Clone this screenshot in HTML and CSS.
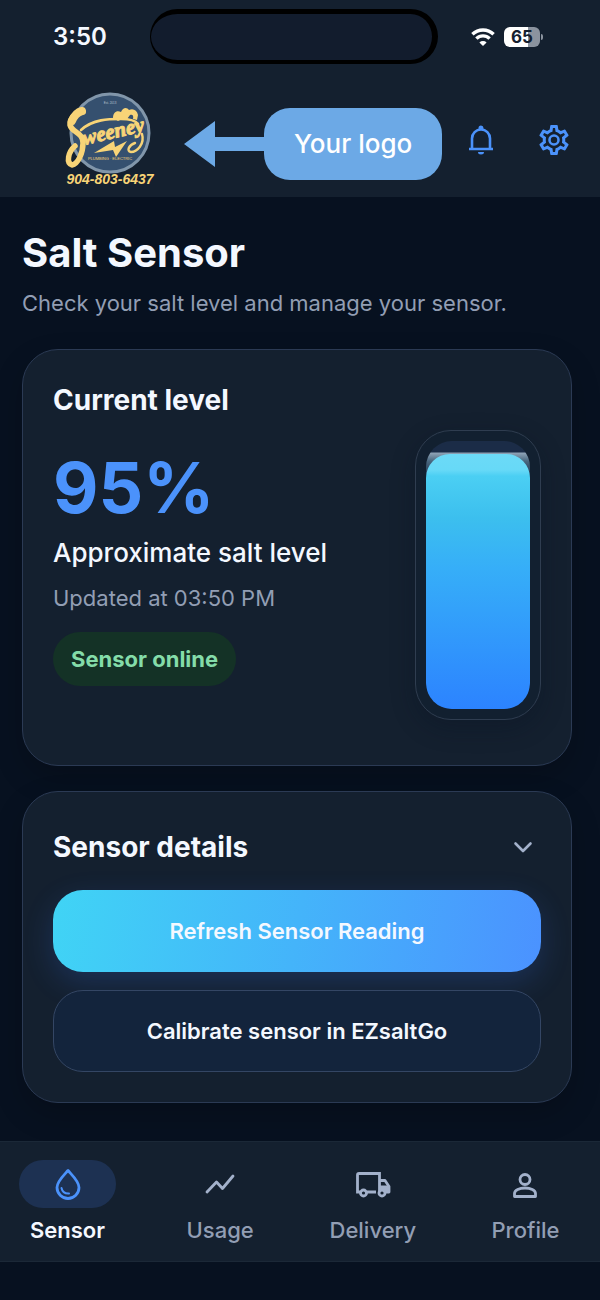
FILE: index.html
```html
<!DOCTYPE html>
<html lang="en">
<head>
  <meta charset="UTF-8">
  <meta name="viewport" content="width=device-width, initial-scale=1.0">
  <title>Salt Sensor</title>
  <link rel="stylesheet" href="styles.css">
</head>
<body>
  <header class="top">
    <div class="status-bar">
      <span class="time">3:50</span>
      <div class="island"></div>
      <div class="status-icons">
        <svg width="24" height="18" viewBox="0 0 24 18" fill="none" stroke="#fff" stroke-width="3.4" aria-hidden="true">
          <path d="M1.4 6.3a15.2 15.2 0 0 1 21.2 0"/>
          <path d="M5.4 10.6a9.4 9.4 0 0 1 13.2 0"/>
          <path d="M12 18l-3.6-3.6a5.1 5.1 0 0 1 7.2 0z" fill="#fff" stroke="none"/>
        </svg>
        <span class="battery">65</span>
      </div>
    </div>
    <div class="app-bar">
      <svg class="logo" width="94" height="96" viewBox="0 0 94 96" role="img" aria-label="Sweeney Plumbing and Electric, 904-803-6437">
        <circle cx="47" cy="41" r="39" fill="#35506f" stroke="#8196aa" stroke-width="3"/>
        <text x="47" y="12" class="logo-est">Est. 2013</text>
        <g fill="none" stroke="#f8d477" stroke-linecap="round">
          <path d="M20 20C14 20 6 26 7 33C9 41 20 40 20 51C20 61 15 72 9 73C3 71 5 60 12 54" stroke-width="5.500"/>
          <path d="M19 19C15 20 11 24 9 29" stroke-width="8"/>
          <path d="M18 38C30 27 46 27 58 27C66 27 72 28 75 32" stroke-width="2.600"/>
          <path d="M79 42C82 52 74 60 68 60C63 59 66 53 72 51" stroke-width="2.400"/>
        </g>
        <path d="M50 26c0-6 4-8 8-6 2-5 6-5 8-2 4-2 8 0 9 5l-1 5-4-1c1-4-1-5-3-4l-3 4h-5l-4 2z" fill="#f8d477"/>
        <text x="21" y="53" class="logo-name" transform="rotate(-13 21 53)">weeney</text>
        <path d="M31 61L51 49L52 55L64 49L53 65L50 58z" fill="#f8d477"/>
        <text x="47" y="68" class="logo-trade">PLUMBING · ELECTRIC</text>
        <text x="47" y="92" class="logo-phone">904-803-6437</text>
      </svg>
      <div class="callout">
        <svg width="80" height="46" viewBox="0 0 80 46" fill="#6ca9e6" aria-hidden="true">
          <path d="M0 23L31 0v16h49v14H31v16z"/>
        </svg>
        <span class="callout-label">Your logo</span>
      </div>
      <div class="actions">
        <button type="button" class="icon-btn" aria-label="Notifications">
          <svg width="36" height="36" viewBox="0 0 36 36" fill="none" stroke="#4b92fb" stroke-width="2.6" aria-hidden="true">
            <path d="M6 27h24M9 27V16.500a9 9 0 0 1 18 0V27" stroke-linejoin="round"/>
            <path d="M15.500 7.500V6a2.500 2.500 0 0 1 5 0v1.500zM15 30h6a3 2.500 0 0 1-6 0z" fill="#4b92fb" stroke="none"/>
          </svg>
        </button>
        <button type="button" class="icon-btn" aria-label="Settings">
          <svg width="36" height="36" viewBox="0 0 24 24" fill="#4b92fb" aria-hidden="true">
            <path d="M19.430 12.980c.04-.32.07-.64.07-.98s-.03-.66-.07-.98l2.110-1.650c.19-.15.24-.42.12-.64l-2-3.460a.5.5 0 0 0-.61-.22l-2.490 1a7.300 7.300 0 0 0-1.690-.98l-.38-2.650A.49.490 0 0 0 14 2h-4a.49.490 0 0 0-.49.420l-.38 2.650c-.61.250-1.170.590-1.690.98l-2.490-1a.5.5 0 0 0-.61.220l-2 3.460c-.13.220-.07.490.12.640l2.110 1.650c-.04.320-.07.650-.07.980s.03.660.07.980l-2.110 1.650c-.19.150-.24.420-.12.640l2 3.460c.12.220.38.300.61.220l2.490-1c.52.400 1.080.730 1.690.98l.38 2.650c.03.240.24.420.49.420h4c.25 0 .46-.18.49-.42l.38-2.650c.61-.25 1.170-.59 1.690-.98l2.490 1c.23.080.49 0 .61-.22l2-3.460c.12-.22.07-.49-.12-.64zm-1.980-1.710c.04.310.05.520.05.730s-.02.430-.05.730l-.14 1.130.89.700 1.080.840-.7 1.210-1.270-.51-1.040-.42-.9.680c-.43.320-.84.560-1.250.730l-1.060.430-.16 1.130-.2 1.350h-1.400l-.35-2.480-1.060-.43c-.43-.18-.83-.41-1.230-.71l-.91-.7-1.060.430-1.270.510-.7-1.210 1.970-1.540-.14-1.130a7 7 0 0 1 0-1.470l.14-1.130-1.970-1.540.7-1.210 2.310.930.910-.69c.43-.32.84-.56 1.250-.73l1.060-.43.350-2.480h1.390l.35 2.480 1.060.430c.43.180.83.410 1.230.71l.91.700 2.330-.94.700 1.210-1.960 1.550z"/>
            <circle cx="12" cy="12" r="3" fill="none" stroke="#4b92fb" stroke-width="1.700"/>
          </svg>
        </button>
      </div>
    </div>
  </header>

  <main>
    <h1>Salt Sensor</h1>
    <p class="subtitle">Check your salt level and manage your sensor.</p>

    <section class="card level-card">
      <h2>Current level</h2>
      <div class="level">
        <div class="level-info">
          <p class="percent">95%</p>
          <p class="level-label">Approximate salt level</p>
          <p class="updated">Updated at 03:50 PM</p>
          <span class="badge">Sensor online</span>
        </div>
        <div class="tank">
          <div class="tank-inner">
            <div class="tank-fill" style="height: 95%"></div>
          </div>
        </div>
      </div>
    </section>

    <section class="card details-card">
      <div class="details-head">
        <h2>Sensor details</h2>
        <button type="button" class="icon-btn" aria-label="Toggle sensor details">
          <svg width="36" height="36" viewBox="0 0 36 36" fill="none" stroke="#a3b1cb" stroke-width="2.600" stroke-linecap="round" stroke-linejoin="round" aria-hidden="true">
            <path d="M10.500 14.500l7.500 7.500 7.500-7.500"/>
          </svg>
        </button>
      </div>
      <button type="button" class="btn primary">Refresh Sensor Reading</button>
      <button type="button" class="btn secondary">Calibrate sensor in EZsaltGo</button>
    </section>
  </main>

  <nav class="tabs">
    <a href="#sensor" class="tab active" aria-current="page">
      <span class="tab-icon">
        <svg width="36" height="36" viewBox="0 0 36 36" fill="none" stroke="#4b92fb" stroke-width="2.800" aria-hidden="true">
          <path d="M18 4.500C14 9 7 15.500 7 21.500a11 11 0 0 0 22 0C29 15.500 22 9 18 4.500z" stroke-linejoin="round"/>
          <path d="M11.500 22c.7 3.500 3.500 5.800 7.500 5.600" stroke-width="2" stroke-linecap="round"/>
        </svg>
      </span>
      Sensor
    </a>
    <a href="#usage" class="tab">
      <span class="tab-icon">
        <svg width="36" height="36" viewBox="0 0 36 36" fill="none" stroke="#a3b1cb" stroke-width="2.800" stroke-linecap="round" stroke-linejoin="round" aria-hidden="true">
          <path d="M5 26l9.500-10 6 6.500L31 10"/>
        </svg>
      </span>
      Usage
    </a>
    <a href="#delivery" class="tab">
      <span class="tab-icon">
        <svg width="36" height="36" viewBox="0 0 36 36" fill="none" stroke="#a3b1cb" stroke-width="2.800" aria-hidden="true">
          <path d="M5 26H2.500V9q0-1.500 1.500-1.500h20.500V26M12 26h9"/>
          <path d="M25 14.500h5l4 6V26h-4" stroke-linejoin="round"/>
          <path d="M24.500 19.500h9V26h-9z" fill="#a3b1cb" stroke="none"/>
          <circle cx="8.500" cy="27" r="3"/>
          <circle cx="27" cy="27" r="3" fill="#14202f"/>
        </svg>
      </span>
      Delivery
    </a>
    <a href="#profile" class="tab">
      <span class="tab-icon">
        <svg width="36" height="36" viewBox="0 0 36 36" fill="none" stroke="#a3b1cb" stroke-width="2.800" stroke-linejoin="round" aria-hidden="true">
          <circle cx="18" cy="13.500" r="5"/>
          <path d="M7.500 30.500v-3c0-3.500 5-5.500 10.500-5.500s10.500 2 10.500 5.500v3z"/>
        </svg>
      </span>
      Profile
    </a>
  </nav>
</body>
</html>
```
FILE: styles.css
```css
* {
  box-sizing: border-box;
}
body {
  margin: 0;
  min-height: 100vh;
  display: flex;
  flex-direction: column;
  font-family: Inter, "Liberation Sans", sans-serif;
  background-color: #071120;
  color: #f4f8ff;
}
h1,
h2,
p {
  margin: 0;
}
button {
  font-family: inherit;
  cursor: pointer;
}
svg {
  display: block;
}

/* Header */
.top {
  background-color: #14202f;
}
.status-bar {
  display: grid;
  grid-template-columns: 1fr 288px 1fr;
  align-items: center;
  padding: 9px 12px 0 0;
}
.time {
  padding-left: 10px;
  text-align: center;
  font-size: 24px;
  font-weight: 600;
}
.island {
  height: 55px;
  border: solid #000;
  border-width: 5px 6px 4px 1px;
  border-radius: 28px;
  background-color: #121c2d;
}
.status-icons {
  display: flex;
  align-items: center;
  gap: 9px;
  padding-left: 33px;
}
.battery {
  position: relative;
  width: 36px;
  border-radius: 6px;
  background: linear-gradient(90deg, #fff 66%, #8b939f 66%);
  color: #14202f;
  font-size: 17px;
  font-weight: 700;
  line-height: 20px;
  text-align: center;
}
.battery::after {
  content: "";
  position: absolute;
  top: 7px;
  right: -3px;
  width: 2px;
  height: 6px;
  border-radius: 0 2px 2px 0;
  background-color: #8b939f;
}
.app-bar {
  display: flex;
  align-items: center;
  padding: 28px 28px 9px 63px;
}
.logo {
  flex: none;
}
.logo text {
  fill: #f8d477;
  text-anchor: middle;
  font-family: "Liberation Sans", sans-serif;
}
.logo .logo-name {
  text-anchor: start;
  font-family: "Liberation Serif", serif;
  font-size: 21px;
  font-style: italic;
  font-weight: bold;
  stroke: #f8d477;
  stroke-width: 1px;
}
.logo .logo-est {
  fill: #b9c4cf;
  font-size: 3px;
}
.logo .logo-trade {
  font-size: 4px;
}
.logo .logo-phone {
  font-size: 14px;
  font-style: italic;
  font-weight: bold;
}
.callout {
  display: flex;
  align-items: center;
  margin: 8px 0 0 27px;
}
.callout-label {
  padding: 0 30px;
  border-radius: 26px;
  background-color: #6ca9e6;
  color: #fff;
  font-size: 26px;
  font-weight: 500;
  line-height: 72px;
  white-space: nowrap;
}
.actions {
  display: flex;
  gap: 37px;
  margin-left: auto;
}
.icon-btn {
  padding: 0;
  border: none;
  background: none;
}

/* Content */
main {
  padding: 32px 28px 38px 22px;
}
h1 {
  font-size: 40px;
  font-weight: 700;
  line-height: 48px;
}
h2 {
  font-size: 28px;
  font-weight: 700;
  line-height: 40px;
}
.subtitle {
  margin: 12px 0 32px;
  color: #929eb4;
  font-size: 22px;
  line-height: 28px;
}
.card {
  padding: 30px;
  border: 1px solid #2b3a54;
  border-radius: 36px;
  background-color: #14202f;
  box-shadow: 0 12px 30px rgba(0, 0, 0, 0.2);
}
.level-card {
  margin-bottom: 25px;
  padding-bottom: 45px;
}
.level {
  display: flex;
  justify-content: space-between;
  margin-top: 10px;
}
.level-info {
  padding-top: 18px;
}
.percent {
  color: #4b92fb;
  font-size: 70px;
  font-weight: 700;
  line-height: 80px;
}
.level-label {
  margin-top: 9px;
  font-size: 26px;
  font-weight: 500;
  line-height: 32px;
}
.updated {
  margin: 15px 0 20px;
  color: #929eb4;
  font-size: 22px;
  line-height: 28px;
}
.badge {
  display: inline-block;
  padding: 0 18px;
  border-radius: 28px;
  background-color: #143226;
  color: #84dca9;
  font-size: 22px;
  font-weight: 700;
  line-height: 54px;
}
.tank {
  width: 126px;
  height: 290px;
  padding: 10px;
  border: 1px solid #2f3d50;
  border-radius: 36px;
  background-color: #122030;
  box-shadow: 0 8px 24px rgba(7, 17, 32, 0.3);
}
.tank-inner {
  display: flex;
  align-items: flex-end;
  height: 100%;
  border-radius: 26px;
  background: linear-gradient(#1b2c47 11px, #8fa3b6 12px, #4a6880 20px, #1b2c47 36px);
  overflow: hidden;
}
.tank-fill {
  width: 100%;
  border-radius: 24px;
  background: linear-gradient(#6cdaf7, #67d9f7 16px, #4bcff3 22px, #3cbfee 25%, #36aef8 45%, #2c83ff);
}
.details-card {
  display: flex;
  flex-direction: column;
  gap: 18px;
}
.details-head {
  display: flex;
  align-items: center;
  justify-content: space-between;
  height: 50px;
}
.btn {
  height: 82px;
  border: none;
  border-radius: 30px;
  color: #f4f8ff;
  font-size: 22px;
  font-weight: 600;
}
.primary {
  background: linear-gradient(100deg, #40d4f5, #44b4fa 50%, #4b92ff);
  box-shadow: 0 10px 30px rgba(60, 120, 250, 0.2);
}
.secondary {
  border: 1px solid #344664;
  background-color: #13243c;
}

/* Bottom tabs */
.tabs {
  display: flex;
  justify-content: space-between;
  padding: 18px 26px 16px 19px;
  border-top: 1px solid #1b2837;
  border-bottom: 1px solid #1b2837;
  background-color: #14202f;
}
.tab {
  display: flex;
  flex-direction: column;
  align-items: center;
  gap: 7px;
  width: 97px;
  color: #929eb4;
  font-size: 22px;
  font-weight: 500;
  line-height: 30px;
  text-decoration: none;
}
.tab-icon {
  display: flex;
  align-items: center;
  justify-content: center;
  width: 100%;
  height: 48px;
  border-radius: 24px;
}
.active {
  color: #f4f8ff;
  font-weight: 600;
}
.active .tab-icon {
  background-color: #1d3152;
}
```
